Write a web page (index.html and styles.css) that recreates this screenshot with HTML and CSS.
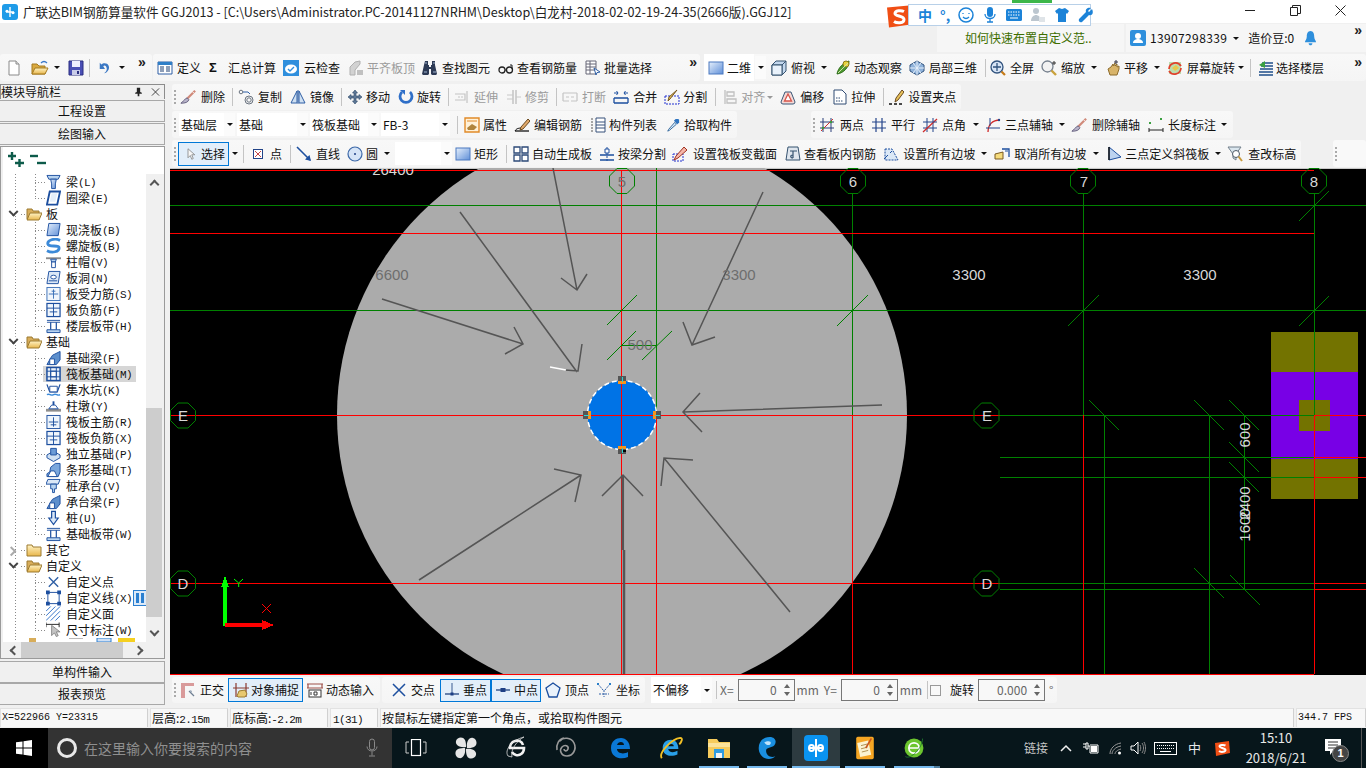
FILE: index.html
```html
<!DOCTYPE html>
<html lang="zh-CN">
<head>
<meta charset="utf-8">
<title>广联达BIM钢筋算量软件 GGJ2013</title>
<link rel="stylesheet" href="styles.css">
</head>
<body>
<svg class="sprite" aria-hidden="true">
<defs>
<linearGradient id="gb" x1="0" y1="0" x2="1" y2="1"><stop offset="0" stop-color="#e6f0fc"/><stop offset="1" stop-color="#5f8fd8"/></linearGradient>
<linearGradient id="gy" x1="0" y1="0" x2="0" y2="1"><stop offset="0" stop-color="#fff3c4"/><stop offset="1" stop-color="#e8b64c"/></linearGradient>
<symbol id="i-new" viewBox="0 0 16 16"><path d="M3 1h7l3 3v11H3z" fill="#fff" stroke="#8a8a8a"/><path d="M10 1v3h3" fill="#e4e4e4" stroke="#8a8a8a"/></symbol>
<symbol id="i-open" viewBox="0 0 18 16"><path d="M1 4h5l2 2h6v8H1z" fill="#d9a93f" stroke="#a57a20"/><path d="M1 14l3-6h13l-3 6z" fill="url(#gy)" stroke="#a57a20"/><path d="M10 3c2-2 4-2 6 0" fill="none" stroke="#3a78c8" stroke-width="1.3"/></symbol>
<symbol id="i-save" viewBox="0 0 16 16"><path d="M1 1h14v14H1z" fill="#4a4fb5" stroke="#2a2f80"/><path d="M4 1h8v6H4z" fill="#eef"/><path d="M4 10h8v5H4z" fill="#c9cce8"/><path d="M9 11h2v3H9z" fill="#2a2f80"/></symbol>
<symbol id="i-undo" viewBox="0 0 16 16"><path d="M5 3c6-2 9 3 7 7-1 2-3 4-5 4 3-2 4-5 2-8-1-1-2-1-3 0l2 3H2V2l2 2z" fill="#3b78c4"/></symbol>
<symbol id="i-def" viewBox="0 0 16 16"><path d="M1 2h14v12H1z" fill="#fff" stroke="#2f5fa5"/><path d="M1 2h14v3H1z" fill="#2f7fc8"/><path d="M3 7h4M3 9h4M3 11h4M9 7h4M9 9h4M9 11h4" stroke="#1c3f72"/></symbol>
<symbol id="i-cloud" viewBox="0 0 16 16"><path d="M0 0h16v16H0z" fill="#2f8fdd"/><ellipse cx="8" cy="9" rx="6" ry="4.5" fill="#fff"/><path d="M5 9l2 2 4-4" fill="none" stroke="#2f8fdd" stroke-width="1.4"/></symbol>
<symbol id="i-flat" viewBox="0 0 16 16"><path d="M2 7l5-5 5-1v3l-5 6v5H2z" fill="#d2d2d2" stroke="#b0b0b0"/><path d="M9 10h6v5H9z" fill="#c0c0c0"/></symbol>
<symbol id="i-find" viewBox="0 0 16 16"><path d="M3 1h3v4h1v2h2V5h1V1h3v4l2 9-1 1H10l-1-1V9H7v5l-1 1H1l-1-1 2-9z" fill="#2d3a55"/><path d="M3 3h2M11 3h2M2 12h3M11 12h3" stroke="#9fb4d0"/></symbol>
<symbol id="i-glass" viewBox="0 0 16 16"><circle cx="4" cy="10" r="3" fill="none" stroke="#222" stroke-width="1.3"/><circle cx="11.5" cy="10" r="3" fill="none" stroke="#222" stroke-width="1.3"/><path d="M7 10h2M14 9V5h-2" fill="none" stroke="#222"/></symbol>
<symbol id="i-batch" viewBox="0 0 16 16"><path d="M1 1h10v13H1z" fill="#fff" stroke="#667"/><path d="M1 4h10M1 7h10M1 10h10M5 1v13" stroke="#667"/><path d="M9 8l6 4-3 .6L11 15z" fill="#fff" stroke="#2f5fa5"/></symbol>
<symbol id="i-2d" viewBox="0 0 16 16"><rect x="1" y="2" width="14" height="12" fill="url(#gb)" stroke="#4b78c0"/></symbol>
<symbol id="i-top" viewBox="0 0 16 16"><path d="M5 1h10v10l-4 4H1V5z" fill="#c4d8ee" stroke="#35526f"/><path d="M1 5h10v10M11 5l4-4" fill="none" stroke="#35526f"/><path d="M1 5h10v10H1z" fill="#e9f2fb" stroke="#35526f"/></symbol>
<symbol id="i-orbit" viewBox="0 0 16 16"><path d="M2 14C3 8 8 3 14 1c0 6-5 12-12 13z" fill="#4f9a32" stroke="#2d6d19"/><circle cx="11" cy="4" r="3" fill="#e7d23c" stroke="#8c7a18"/><path d="M3 13L13 3" stroke="#cde3a8"/></symbol>
<symbol id="i-local" viewBox="0 0 16 16"><path d="M8 1l7 4v6l-7 4-7-4V5z" fill="#8fb2da" stroke="#31537e"/><path d="M4 3l8 10M8 1v14M1 8h14M12 3L4 13" stroke="#e7f0fa"/></symbol>
<symbol id="i-full" viewBox="0 0 16 16"><circle cx="7" cy="7" r="6" fill="#d7e4f5" stroke="#31537e" stroke-width="1.3"/><path d="M7 3v8M3 7h8" stroke="#31537e" stroke-width="1.3"/><path d="M11.5 11.5L15 15" stroke="#c57a18" stroke-width="2.2"/></symbol>
<symbol id="i-zoom" viewBox="0 0 16 16"><circle cx="6.5" cy="6.5" r="5.5" fill="#f2f2f2" stroke="#76818e" stroke-width="1.3"/><path d="M10.5 10.5L15 15" stroke="#c9a13c" stroke-width="2.4"/><path d="M13 1v4M11 3h4" stroke="#333"/></symbol>
<symbol id="i-pan" viewBox="0 0 16 16"><path d="M3 9l2 6h7l2-6V6l-2 1V4l-2 2V3L8 6V4L6 7z" fill="#d8b46a" stroke="#8d6c2d"/><path d="M11 0v4M9 2h4" stroke="#334"/></symbol>
<symbol id="i-rot" viewBox="0 0 16 16"><rect x="2" y="2" width="12" height="12" fill="#bcdcb0"/><path d="M5 8l4-3 3 3-4 3z" fill="#e9c94d"/><path d="M2 9a6.5 6.5 0 0 1 12-3M14 8a6.5 6.5 0 0 1-12 3" fill="none" stroke="#e0402c" stroke-width="1.7"/></symbol>
<symbol id="i-floor" viewBox="0 0 16 16"><path d="M4 3h11M3 6h12M2 9h13M1 12h14M1 15h14" stroke="#1f4f8a" stroke-width="1.4"/><path d="M7 1L1 5l6 3z" fill="#3aa040"/></symbol>
<symbol id="i-brush" viewBox="0 0 18 16"><path d="M17 1L8 10" stroke="#d08a7a" stroke-width="2.5"/><path d="M8 9l2 2c-1 3-4 4-9 4 2-1 3-4 7-6z" fill="#b9b4ca" stroke="#5c5878"/><path d="M14 2l2 2" stroke="#fff"/></symbol>
<symbol id="i-copy" viewBox="0 0 16 16"><circle cx="3" cy="3" r="1.8" fill="none" stroke="#6b7480"/><circle cx="11" cy="11" r="4" fill="none" stroke="#6b7480"/><circle cx="11" cy="11" r="2.2" fill="none" stroke="#6b7480"/><path d="M5 3h5l2 2" fill="none" stroke="#2f5fa5"/></symbol>
<symbol id="i-mirror" viewBox="0 0 16 16"><path d="M1 14L7 2v12zM15 14L9 2v12z" fill="#cfe0f2" stroke="#2f5fa5"/><path d="M8 1v14" stroke="#2f5fa5"/></symbol>
<symbol id="i-move" viewBox="0 0 16 16"><path d="M8 1l2.5 3H9v3h3V5.5L15 8l-3 2.5V9H9v3h1.5L8 15l-2.5-3H7V9H4v1.5L1 8l3-2.5V7h3V4H5.5z" fill="#5e7896" stroke="#2c4868" stroke-width=".6"/></symbol>
<symbol id="i-rotate" viewBox="0 0 16 16"><path d="M4 3a6 6 0 1 0 8 0" fill="none" stroke="#2f6fc8" stroke-width="2.8"/><path d="M2 1h5v5z" fill="#2f6fc8"/></symbol>
<symbol id="i-extend" viewBox="0 0 16 16"><path d="M1 5h10v6H1M13 2v12" fill="none" stroke="#c4c4c4" stroke-width="1.2"/><path d="M4 8h5" stroke="#c4c4c4" stroke-dasharray="2 1"/></symbol>
<symbol id="i-trim" viewBox="0 0 16 16"><path d="M7 1v14M10 1v14" stroke="#bcbcbc" stroke-width="1.3"/><path d="M1 6h6M1 10h6M10 8h5" stroke="#c8c8c8"/></symbol>
<symbol id="i-break" viewBox="0 0 16 16"><path d="M1 4h14M1 12h6M9 12h6M1 4v8M15 4v8" fill="none" stroke="#c4c4c4" stroke-width="1.2"/><path d="M4 8h3M9 8h3" stroke="#c4c4c4"/></symbol>
<symbol id="i-merge" viewBox="0 0 16 16"><path d="M1 9h14M1 14h14M1 9v5M15 9v5" fill="none" stroke="#1d4f9f" stroke-width="1.3"/><path d="M1 4h4l-1.5-2M15 4h-4l1.5-2M5 4l-1.5 2M11 4l1.5 2" fill="none" stroke="#1d4f9f"/></symbol>
<symbol id="i-split" viewBox="0 0 16 16"><path d="M1 7h14v8H1z" fill="none" stroke="#2030d0" stroke-dasharray="2 1"/><path d="M13 1L6 10l-2 2 1-4z" fill="#e8c25a" stroke="#7a5a20"/></symbol>
<symbol id="i-align" viewBox="0 0 16 16"><path d="M3 1v14M5 3h7v4H5zM5 10h9v4H5z" fill="none" stroke="#c0c0c0" stroke-width="1.3"/></symbol>
<symbol id="i-offset" viewBox="0 0 16 16"><path d="M5 3h6l4 10a2 2 0 0 1-2 2H3a2 2 0 0 1-2-2z" fill="#f5d9d6" stroke="#3a5878"/><path d="M8 5l3.5 7h-7z" fill="#fff" stroke="#d7554b" stroke-width="1.3"/></symbol>
<symbol id="i-stretch" viewBox="0 0 16 16"><path d="M2 1h8l4 4v10H2z" fill="#fff" stroke="#2f4a72"/><path d="M4 12h7M4 9h5" stroke="#2f4a72" stroke-dasharray="1.5 1"/></symbol>
<symbol id="i-grips" viewBox="0 0 16 16"><path d="M1 15h3M6 15h3M11 15h3" stroke="#111" stroke-width="1.5"/><path d="M7 13l1-4 6-8 2 2-6 8z" fill="#e7c15a" stroke="#6a4a20"/></symbol>
<symbol id="i-attr" viewBox="0 0 16 16"><path d="M1 1h14v14H1z" fill="#fff1d8" stroke="#e18a28" stroke-width="1.4"/><path d="M3 4h10" stroke="#e18a28"/><path d="M3 11l5-4 5 3-3 3H4z" fill="#b0843c"/></symbol>
<symbol id="i-edit" viewBox="0 0 16 16"><path d="M1 14h14" stroke="#111" stroke-width="1.3"/><path d="M1 14c2-4 6-2 7-4" fill="none" stroke="#111"/><path d="M7 10l7-8 2 2-7 8-3 1z" fill="#e0a86a" stroke="#6a4a20"/></symbol>
<symbol id="i-list" viewBox="0 0 16 16"><path d="M1 2h2M1 5h2M1 8h2M1 11h2M1 14h2" stroke="#555"/><path d="M6 1h9v14H6zM6 5h9M6 8h9M6 11h9" fill="#fff" stroke="#36507a"/></symbol>
<symbol id="i-pick" viewBox="0 0 16 16"><path d="M10 5l-7 8-1 2 2-1 8-7z" fill="#d9ecfa" stroke="#255c94"/><path d="M9 3l4 4 2-2V2l-1-1h-3z" fill="#2f74c0"/></symbol>
<symbol id="i-two" viewBox="0 0 16 16"><path d="M4 1v14M12 1v14M1 5h14M1 11h14" stroke="#2a3f7a"/><path d="M2 14L14 2" stroke="#d02a2a"/><circle cx="4" cy="11" r="1.3" fill="#3d9a40"/><circle cx="12" cy="5" r="1.3" fill="#3d9a40"/></symbol>
<symbol id="i-para" viewBox="0 0 16 16"><path d="M5 1v14M11 1v14M1 5h14M1 11h14" stroke="#23448a" stroke-width="1.2"/></symbol>
<symbol id="i-angle" viewBox="0 0 16 16"><path d="M5 1v14M11 1v14M1 11h14" stroke="#23448a"/><path d="M1 15L15 2" stroke="#d02a2a" stroke-width="1.3"/><path d="M1 5h14" stroke="#23448a"/></symbol>
<symbol id="i-arc" viewBox="0 0 16 16"><path d="M3 15C3 8 7 3 15 3" fill="none" stroke="#d02a2a" stroke-width="1.3"/><path d="M1 11h14M5 1v8" stroke="#23448a"/><circle cx="14" cy="3" r="1.2" fill="#23448a"/></symbol>
<symbol id="i-dim" viewBox="0 0 16 16"><path d="M1 11v4M15 11v4M1 13h14" stroke="#222"/><rect x="1" y="5" width="2" height="2" fill="#3aa040"/><rect x="12" y="1" width="2" height="2" fill="#3aa040"/></symbol>
<symbol id="i-cursor" viewBox="0 0 16 16"><path d="M4 1v12l3-3 2 5 2-1-2-5h4z" fill="#f7f7f7" stroke="#7c7c7c"/></symbol>
<symbol id="i-point" viewBox="0 0 16 16"><rect x="2" y="2" width="12" height="12" fill="#fff" stroke="#1d3f85" stroke-width="1.3"/><path d="M4 4l8 8M12 4l-8 8" stroke="#c03030" stroke-width="1.2"/></symbol>
<symbol id="i-line" viewBox="0 0 16 16"><path d="M1 1l13 13" stroke="#1d4f9f" stroke-width="1.6"/><path d="M15 15l-6-1.500L13.500 9z" fill="#1d4f9f"/></symbol>
<symbol id="i-circle" viewBox="0 0 16 16"><circle cx="8" cy="8" r="7" fill="#d5e4f7" stroke="#3c68a8" stroke-width="1.2"/><circle cx="8" cy="8" r="1" fill="#1d3f85"/></symbol>
<symbol id="i-auto" viewBox="0 0 16 16"><path d="M1 1h6v6H1zM9 1h6v6H9zM1 9h6v6H1zM9 9h6v6H9z" fill="#fff" stroke="#2d4a78" stroke-width="1.3"/></symbol>
<symbol id="i-bsplit" viewBox="0 0 16 16"><path d="M1 9h14M1 14h14" stroke="#1d4f9f" stroke-width="1.3"/><path d="M8 1v14" stroke="#1d4f9f" stroke-dasharray="2 1"/><path d="M6 3h4v4H6z" fill="#fff" stroke="#1d4f9f"/></symbol>
<symbol id="i-var" viewBox="0 0 16 16"><path d="M1 8h10v7H1z" fill="none" stroke="#2030d0" stroke-dasharray="2 1"/><path d="M12 1L4 10l-2 4 4-2 9-8z" fill="#f5b6a8" stroke="#a03020"/></symbol>
<symbol id="i-check" viewBox="0 0 16 16"><path d="M3 1h10l2 13H1z" fill="#dfe6ee" stroke="#35526f"/><path d="M8 5v7M8 12c-3 0-3-3 0-3M5 5h7" fill="none" stroke="#35526f" stroke-width="1.2"/></symbol>
<symbol id="i-slope" viewBox="0 0 16 16"><path d="M2 3h7l6 11H2z" fill="#dbe8f6" stroke="#1d4f9f" stroke-dasharray="2 1"/><path d="M1 13l4-4M7 7l2-2" stroke="#1d4f9f"/></symbol>
<symbol id="i-uncancel" viewBox="0 0 16 16"><path d="M1 8l8-2v7H1z" fill="#f5db7c" stroke="#7a5a20"/><path d="M8 3h7v8" fill="none" stroke="#1d4f9f" stroke-width="1.3"/><path d="M11 5h3" stroke="#1d4f9f"/></symbol>
<symbol id="i-3pt" viewBox="0 0 16 16"><path d="M2 1v13l12-3z" fill="#bcd3f0" stroke="#1d4f9f"/><path d="M2 1v13" stroke="#111" stroke-width="1.5"/></symbol>
<symbol id="i-elev" viewBox="0 0 16 16"><path d="M1 1h13l-5 7v6l-3-2V8z" fill="#dbe7ef" stroke="#72808c"/><circle cx="9" cy="8" r="3.5" fill="#fff" stroke="#4e5a66"/><path d="M11.5 10.5L15 15" stroke="#c99a3c" stroke-width="2"/></symbol>
<symbol id="i-ortho" viewBox="0 0 16 16"><path d="M1 1h13v3H5v12H1z" fill="#d99a9a"/><path d="M9 9l5 5" stroke="#6f7f92" stroke-width="1.3"/><path d="M10 8l2 1-1 2z" fill="#8c9cb0"/></symbol>
<symbol id="i-snap" viewBox="0 0 18 16"><path d="M4 1v14M14 1v14M1 6h16" stroke="#8a3a30" stroke-width="1.2"/><path d="M5 14l2-5 6-1 2 4-2 3H6z" fill="#e8c870" stroke="#9c7c30"/></symbol>
<symbol id="i-dyn" viewBox="0 0 18 16"><path d="M1 2h16M1 6h16M2 2v4M16 2v4" stroke="#a0524a" stroke-width="1.2" fill="none"/><rect x="3" y="8" width="12" height="7" fill="#fff" stroke="#333"/><path d="M5 10v3M8 10h3v3H8z" stroke="#333" fill="none"/></symbol>
<symbol id="i-cross" viewBox="0 0 16 16"><path d="M2 2l12 12M14 2L2 14" stroke="#1d4f9f" stroke-width="1.5"/></symbol>
<symbol id="i-perp" viewBox="0 0 16 16"><path d="M1 12h14" stroke="#3a5a90" stroke-width="1.5"/><path d="M8 1v11" stroke="#3a5a90"/><rect x="6.5" y="10.5" width="3" height="3" fill="#1d3f85"/></symbol>
<symbol id="i-mid" viewBox="0 0 16 16"><path d="M1 8h14" stroke="#3a5a90" stroke-width="1.5"/><rect x="5.5" y="6" width="5" height="4" fill="#1d3f85"/></symbol>
<symbol id="i-vertex" viewBox="0 0 16 16"><path d="M8 1l7 5-3 9H4L1 6z" fill="#eaf2fb" stroke="#1d4f9f" stroke-width="1.3"/></symbol>
<symbol id="i-coord" viewBox="0 0 16 16"><path d="M2 2l5 6M14 2L9 8M8 8v7M3 12h10" stroke="#2f5fa5" stroke-dasharray="2 1"/><rect x="1" y="1" width="2" height="2" fill="#2a7fc8"/><rect x="13" y="1" width="2" height="2" fill="#2a7fc8"/></symbol>
<symbol id="t-beam" viewBox="0 0 16 16"><path d="M1 1h14l-2 4H3z" fill="#b7d3f0" stroke="#1d4f9f"/><path d="M5 5h6l-1 5v5H6v-5z" fill="url(#gb)" stroke="#1d4f9f"/></symbol>
<symbol id="t-ring" viewBox="0 0 16 16"><path d="M4 1h11l-3 14H1z" fill="none" stroke="#1d4f9f" stroke-width="2"/><path d="M6 3h6l-2 9H4z" fill="#e5effa"/></symbol>
<symbol id="t-slab" viewBox="0 0 16 16"><path d="M3 1h12l-2 13H1z" fill="url(#gb)" stroke="#1d4f9f"/></symbol>
<symbol id="t-spiral" viewBox="0 0 16 16"><path d="M15 2C9-1 1 2 2 6s12 0 12 4-7 6-13 3" fill="none" stroke="#3c8ad8" stroke-width="3"/></symbol>
<symbol id="t-cap" viewBox="0 0 16 16"><path d="M0 3h16v2H0z" fill="#8a8a8a"/><path d="M5 5h6l-1 3H6z" fill="#b7d3f0" stroke="#1d4f9f"/><path d="M6 8h4v6H6z" fill="#fff" stroke="#1d4f9f"/></symbol>
<symbol id="t-hole" viewBox="0 0 16 16"><path d="M3 1h12l-2 13H1z" fill="#dbe8f7" stroke="#1d4f9f"/><ellipse cx="8" cy="7" rx="3" ry="2" fill="#fff" stroke="#1d4f9f"/><path d="M3 11h9" stroke="#1d4f9f"/></symbol>
<symbol id="t-force" viewBox="0 0 16 16"><rect x="1" y="1" width="14" height="14" fill="#f0f6fc" stroke="#3a70b8"/><path d="M8 3v10M3 8h10M6 5h4" stroke="#3a70b8"/></symbol>
<symbol id="t-neg" viewBox="0 0 16 16"><rect x="1" y="1" width="14" height="14" fill="#f0f6fc" stroke="#1d4f9f" stroke-width="1.3"/><path d="M8 1v14M1 6h14M4 10h8" stroke="#1d4f9f"/></symbol>
<symbol id="t-band" viewBox="0 0 16 16"><path d="M1 2h14M1 4h14" stroke="#1d4f9f"/><path d="M5 4v8M11 4v8" stroke="#1d4f9f" stroke-width="1.3"/><path d="M1 12h14v3H1z" fill="#b7d3f0" stroke="#1d4f9f"/></symbol>
<symbol id="t-fbeam" viewBox="0 0 16 16"><path d="M1 15l4-7 2-3 8-4v9l-4 5z" fill="#5d8fcc" stroke="#1d4f9f"/><path d="M4 15V9h5v6z" fill="#fff" stroke="#1d4f9f"/></symbol>
<symbol id="t-raft" viewBox="0 0 16 16"><rect x="1" y="1" width="14" height="14" fill="#e9f1fa" stroke="#1d4f9f" stroke-width="1.6"/><rect x="5" y="5" width="6" height="6" fill="#fff" stroke="#1d4f9f"/><path d="M1 5h14M1 11h14M5 1v14M11 1v14" stroke="#1d4f9f"/></symbol>
<symbol id="t-pit" viewBox="0 0 16 16"><path d="M1 2l3 8h8l3-8" fill="none" stroke="#1d4f9f" stroke-width="1.3"/><path d="M4 4h8v6H4z" fill="#fff" stroke="#1d4f9f"/><path d="M1 13c3-2 4 2 7 0s4 2 7 0" fill="none" stroke="#3c8ad8" stroke-width="1.5"/></symbol>
<symbol id="t-pier" viewBox="0 0 16 16"><path d="M0 11h16v3H0z" fill="#8e8e8e"/><path d="M3 11l3-4h4l3 4z" fill="#fff" stroke="#1d4f9f"/><path d="M7 3h2v4H7z" fill="#1d4f9f"/></symbol>
<symbol id="t-rmain" viewBox="0 0 16 16"><rect x="1" y="1" width="14" height="14" fill="#eef5fc" stroke="#1d4f9f"/><path d="M8 3v10M3 8h10M5 11h6" stroke="#1d4f9f"/></symbol>
<symbol id="t-indep" viewBox="0 0 16 16"><path d="M1 9l7-4 7 4v3l-7 4-7-4z" fill="#cfe0f2" stroke="#1d4f9f"/><path d="M5 2h6v7H5z" fill="#6b9bd6" stroke="#1d4f9f"/></symbol>
<symbol id="t-strip" viewBox="0 0 16 16"><path d="M1 15v-3l3-2 1-5 5-4h5v9l-2 5z" fill="#7ba7dc" stroke="#1d4f9f"/><path d="M2 15l3-6h4l3 6z" fill="#fff" stroke="#1d4f9f"/></symbol>
<symbol id="t-pilecap" viewBox="0 0 16 16"><path d="M2 1h13l-2 5H0z" fill="#dbe8f7" stroke="#1d4f9f"/><path d="M5 6h6v5H9v4H7v-4H5z" fill="#b7d3f0" stroke="#1d4f9f"/></symbol>
<symbol id="t-pile" viewBox="0 0 16 16"><path d="M6 1h4v7h3l-5 7-5-7h3z" fill="#dbe8f7" stroke="#1d4f9f" stroke-width="1.3"/></symbol>
<symbol id="t-x" viewBox="0 0 16 16"><path d="M3 3l10 10M13 3L3 13" stroke="#2f5fa5" stroke-width="1.5"/></symbol>
<symbol id="t-lbox" viewBox="0 0 16 16"><rect x="2" y="2" width="12" height="12" fill="none" stroke="#1d4f9f"/><path d="M0 0h4v4H0zM12 0h4v4h-4zM0 12h4v4H0zM12 12h4v4h-4z" fill="#1d4f9f"/></symbol>
<symbol id="t-hatch" viewBox="0 0 16 16"><path d="M0 5L5 0M0 10L10 0M0 15L15 0M5 15L15 5M10 15l5-5" stroke="#2f6fc8"/></symbol>
<symbol id="t-dimc" viewBox="0 0 16 16"><path d="M0 0v5M14 0v5M0 2h14" stroke="#222"/><path d="M6 3v11l3-3 2 4 2-1-2-4h4z" fill="#c4c4c4" stroke="#888"/></symbol>
<symbol id="t-fo" viewBox="0 0 16 14"><path d="M1 2h5l1 2h6v8H1z" fill="#d8ad5a" stroke="#9c7a30"/><path d="M1 13l3-7h12l-3 7z" fill="url(#gy)" stroke="#9c7a30"/></symbol>
<symbol id="t-fc" viewBox="0 0 16 14"><path d="M1 2h5l1 2h8v9H1z" fill="url(#gy)" stroke="#9c7a30"/></symbol>
</defs>
</svg>

<header class="titlebar">
  <svg class="applogo" viewBox="0 0 16 16"><rect width="16" height="16" rx="3" fill="#1e9be8"/><path d="M8 3v10M4 8h8M4 8c0-2 2-2 2 0M12 8c0 2-2 2-2 0" fill="none" stroke="#fff" stroke-width="1.4"/></svg>
  <span class="titletext">广联达BIM钢筋算量软件 GGJ2013 - [C:\Users\Administrator.PC-20141127NRHM\Desktop\白龙村-2018-02-02-19-24-35(2666版).GGJ12]</span>
  <span class="winbtns">
    <svg viewBox="0 0 11 11"><path d="M0 5.5h10" stroke="#222"/></svg>
    <svg viewBox="0 0 11 11"><path d="M.5 2.500h7v8h-7zM2.500 2.500v-2h8v8h-3" fill="none" stroke="#222"/></svg>
    <svg viewBox="0 0 11 11"><path d="M.5.5l10 10M10.500.500l-10 10" stroke="#222"/></svg>
  </span>
</header>

<div class="sogou">
  <svg class="sg-s" viewBox="0 0 28 24"><path d="M3 3l22-2 2 19-22 3z" fill="#f04e14"/><path d="M20 7c-3-1.500-9-1-9 2s9 2 9 6-7 4-10 2" fill="none" stroke="#fff" stroke-width="3"/></svg>
  <div class="sg-bar">
    <span class="sg-zh">中</span><span class="sg-p">°,</span>
    <svg viewBox="0 0 16 16"><circle cx="8" cy="8" r="7" fill="none" stroke="#1c83d8" stroke-width="1.5"/><path d="M5 6v1M11 6v1M5 10c2 2 4 2 6 0" stroke="#1c83d8" fill="none" stroke-width="1.3"/></svg>
    <svg viewBox="0 0 16 16"><rect x="5" y="0" width="6" height="10" rx="3" fill="#1c83d8"/><path d="M3 7c0 6 10 6 10 0M8 12v3M5 15h6" fill="none" stroke="#1c83d8" stroke-width="1.3"/></svg>
    <svg viewBox="0 0 16 16"><rect x="0" y="2" width="16" height="12" rx="1.5" fill="#1c83d8"/><path d="M2 5h12M2 8h12" stroke="#fff" stroke-dasharray="1.5 1"/><path d="M4 11h8" stroke="#fff"/></svg>
    <svg viewBox="0 0 16 16"><circle cx="6" cy="4" r="3" fill="#bcc6cf"/><path d="M1 14c0-4 3-6 5-6s5 2 5 6z" fill="#bcc6cf"/><path d="M9 10h6v5H9z" fill="#dfe4e8"/></svg>
    <svg viewBox="0 0 16 16"><path d="M5 1l3 1 3-1 4 3-2 3-1-1v9H4V6L3 7 1 4z" fill="#1c83d8"/></svg>
    <svg viewBox="0 0 16 16"><path d="M14 2l-3 3-1-1 3-3c-3-1-6 1-5 4L1 12c-1 2 1 4 3 3l7-7c3 1 5-2 3-6z" fill="#1c83d8"/></svg>
  </div>
</div>
<div class="greentab"></div>

<div class="topbar">
  <div class="notice">如何快速布置自定义范..</div>
  <div class="userbox">
    <svg class="ic" viewBox="0 0 16 16"><rect width="16" height="16" rx="2" fill="#2e8fdc"/><circle cx="8" cy="6" r="3" fill="#fff"/><path d="M3 13c0-3 3-4 5-4s5 1 5 4z" fill="#fff"/></svg>
    <span class="phone">13907298339</span><i class="dd dd-phone"></i>
    <span class="bean">造价豆:0</span>
    <svg class="bell" viewBox="0 0 14 18"><path d="M7 1c3 0 4 3 4 6 0 3 2 4 2 6H1c0-2 2-3 2-6 0-3 1-6 4-6z" fill="#2e8fdc"/><path d="M5 14c0 3 4 3 4 0z" fill="#2e8fdc"/></svg>
    <span class="more more-user">»</span>
  </div>
</div>

<div class="row row1">
  <div class="seg seg-a">
    <svg class="ic ic-a"><use href="#i-new"/></svg>
    <svg class="ic ic-b"><use href="#i-open"/></svg><i class="dd dd-a"></i>
    <svg class="ic ic-c"><use href="#i-save"/></svg><i class="sep sep-a"></i>
    <svg class="ic ic-d"><use href="#i-undo"/></svg><i class="dd dd-b"></i>
    <span class="more more-a">»</span>
  </div>
  <div class="seg seg-b">
    <span class="it"><svg class="ic"><use href="#i-def"/></svg>定义</span>
    <span class="it m7"><b class="sigma">Σ</b>汇总计算</span>
    <span class="it g5"><svg class="ic"><use href="#i-cloud"/></svg>云检查</span>
    <span class="it off g3 m7"><svg class="ic"><use href="#i-flat"/></svg>平齐板顶</span>
    <span class="it"><svg class="ic"><use href="#i-find"/></svg>查找图元</span>
    <span class="it g3"><svg class="ic"><use href="#i-glass"/></svg>查看钢筋量</span>
    <span class="it g3"><svg class="ic"><use href="#i-batch"/></svg>批量选择</span>
    <span class="more more-b">»</span>
  </div>
  <div class="seg seg-c">
    <span class="combo c-2d"><svg class="ic"><use href="#i-2d"/></svg>二维</span><span class="ddbox"><i class="dd"></i></span>
    <span class="it"><svg class="ic"><use href="#i-top"/></svg>俯视<i class="dd dd-in"></i></span>
    <span class="it g3 m7"><svg class="ic"><use href="#i-orbit"/></svg>动态观察</span>
    <span class="it"><svg class="ic"><use href="#i-local"/></svg>局部三维</span><i class="sep sep-4"></i>
    <span class="it m7"><svg class="ic"><use href="#i-full"/></svg>全屏</span>
    <span class="it"><svg class="ic"><use href="#i-zoom"/></svg>缩放<i class="dd dd-in"></i></span>
    <span class="it g3 m7"><svg class="ic"><use href="#i-pan"/></svg>平移<i class="dd dd-3"></i></span>
    <span class="it m6"><svg class="ic"><use href="#i-rot"/></svg>屏幕旋转<i class="dd dd-near"></i></span><i class="sep sep-7"></i>
    <span class="it g2"><svg class="ic"><use href="#i-floor"/></svg>选择楼层</span>
    <span class="more more-c">»</span>
  </div>
</div>

<div class="main">
  <aside class="side">
    <div class="side-head"><span>模块导航栏</span><span class="pins"><svg viewBox="0 0 10 12"><path d="M3 1h4v5l2 1v1H6v3H4V8H1V7l2-1z" fill="#222"/></svg><svg viewBox="0 0 10 10"><path d="M1 1l8 8M9 1L1 9" stroke="#333"/></svg></span></div>
    <button class="sbtn sbtn-a">工程设置</button>
    <button class="sbtn">绘图输入</button>
    <div class="panel">
      <div class="panel-tools">
        <svg viewBox="0 0 16 15"><path d="M0 4h8M4 0v8" stroke="#0d5b4a" stroke-width="2.4"/><path d="M7 11h9M11.500 7v8" stroke="#0d5b4a" stroke-width="2.4"/></svg>
        <svg viewBox="0 0 16 15"><path d="M0 4h8" stroke="#0d5b4a" stroke-width="2.4"/><path d="M7 11h9" stroke="#0d5b4a" stroke-width="2.4"/></svg>
      </div>
      <div class="tree-wrap">
        <ul class="tree">
          <li class="n"><svg class="ti"><use href="#t-beam"/></svg>梁<span class="lat">(L)</span></li>
          <li class="n last"><svg class="ti"><use href="#t-ring"/></svg>圈梁<span class="lat">(E)</span></li>
          <li class="g"><i class="chev"></i><svg class="fo"><use href="#t-fo"/></svg>板</li>
          <li class="n"><svg class="ti"><use href="#t-slab"/></svg>现浇板<span class="lat">(B)</span></li>
          <li class="n"><svg class="ti"><use href="#t-spiral"/></svg>螺旋板<span class="lat">(B)</span></li>
          <li class="n"><svg class="ti"><use href="#t-cap"/></svg>柱帽<span class="lat">(V)</span></li>
          <li class="n"><svg class="ti"><use href="#t-hole"/></svg>板洞<span class="lat">(N)</span></li>
          <li class="n"><svg class="ti"><use href="#t-force"/></svg>板受力筋<span class="lat">(S)</span></li>
          <li class="n"><svg class="ti"><use href="#t-neg"/></svg>板负筋<span class="lat">(F)</span></li>
          <li class="n last"><svg class="ti"><use href="#t-band"/></svg>楼层板带<span class="lat">(H)</span></li>
          <li class="g"><i class="chev"></i><svg class="fo"><use href="#t-fo"/></svg>基础</li>
          <li class="n"><svg class="ti"><use href="#t-fbeam"/></svg>基础梁<span class="lat">(F)</span></li>
          <li class="n sel"><svg class="ti"><use href="#t-raft"/></svg>筏板基础<span class="lat">(M)</span></li>
          <li class="n"><svg class="ti"><use href="#t-pit"/></svg>集水坑<span class="lat">(K)</span></li>
          <li class="n"><svg class="ti"><use href="#t-pier"/></svg>柱墩<span class="lat">(Y)</span></li>
          <li class="n"><svg class="ti"><use href="#t-rmain"/></svg>筏板主筋<span class="lat">(R)</span></li>
          <li class="n"><svg class="ti"><use href="#t-neg"/></svg>筏板负筋<span class="lat">(X)</span></li>
          <li class="n"><svg class="ti"><use href="#t-indep"/></svg>独立基础<span class="lat">(P)</span></li>
          <li class="n"><svg class="ti"><use href="#t-strip"/></svg>条形基础<span class="lat">(T)</span></li>
          <li class="n"><svg class="ti"><use href="#t-pilecap"/></svg>桩承台<span class="lat">(V)</span></li>
          <li class="n"><svg class="ti"><use href="#t-fbeam"/></svg>承台梁<span class="lat">(F)</span></li>
          <li class="n"><svg class="ti"><use href="#t-pile"/></svg>桩<span class="lat">(U)</span></li>
          <li class="n last"><svg class="ti"><use href="#t-band"/></svg>基础板带<span class="lat">(W)</span></li>
          <li class="g"><i class="chev shut"></i><svg class="fo"><use href="#t-fc"/></svg>其它</li>
          <li class="g"><i class="chev"></i><svg class="fo"><use href="#t-fo"/></svg>自定义</li>
          <li class="n"><svg class="ti"><use href="#t-x"/></svg>自定义点</li>
          <li class="n"><svg class="ti"><use href="#t-lbox"/></svg>自定义线<span class="lat">(X)</span></li>
          <li class="n"><svg class="ti"><use href="#t-hatch"/></svg>自定义面</li>
          <li class="n last"><svg class="ti"><use href="#t-dimc"/></svg>尺寸标注<span class="lat">(W)</span></li>
        </ul>
        <svg class="float-ic" viewBox="0 0 14 16"><rect width="14" height="16" fill="#dbe9f8"/><rect x=".5" y=".5" width="13" height="15" fill="none" stroke="#2a7fd0"/><path d="M3 3h3v10H3zM8 3h3v10H8z" fill="#2a7fd0"/></svg>
        <svg class="float-b" viewBox="0 0 106 4"><path d="M0 0h7v4H0z" fill="#d8ad5a"/><path d="M40 0h14" fill="none" stroke="#777"/><path d="M68 0h14v4H68z" fill="#cfe0f5" stroke="#2a7fd0"/><path d="M89 0h17v4H89z" fill="#f5d020"/></svg>
        <div class="vscroll"><i class="up"></i><b class="vthumb"></b><i class="down"></i></div>
      </div>
      <div class="hscroll"><i class="left"></i><b class="hthumb"></b><i class="right"></i></div>
    </div>
    <button class="sbtn sbtn-b">单构件输入</button>
    <button class="sbtn sbtn-c">报表预览</button>
  </aside>

  <section class="work">
    <div class="row row2">
      <div class="seg seg-d">
        <i class="grip"></i>
        <span class="it g5 m7 first"><svg class="ic"><use href="#i-brush"/></svg>删除</span><i class="sep"></i>
        <span class="it"><svg class="ic"><use href="#i-copy"/></svg>复制</span>
        <span class="it m7"><svg class="ic"><use href="#i-mirror"/></svg>镜像</span><i class="sep"></i>
        <span class="it g3"><svg class="ic"><use href="#i-move"/></svg>移动</span>
        <span class="it g3 m7"><svg class="ic"><use href="#i-rotate"/></svg>旋转</span><i class="sep"></i>
        <span class="it off"><svg class="ic"><use href="#i-extend"/></svg>延伸</span>
        <span class="it off g3 m7"><svg class="ic"><use href="#i-trim"/></svg>修剪</span><i class="sep"></i>
        <span class="it off m7"><svg class="ic"><use href="#i-break"/></svg>打断</span>
        <span class="it m7"><svg class="ic"><use href="#i-merge"/></svg>合并</span>
        <span class="it g3"><svg class="ic"><use href="#i-split"/></svg>分割</span><i class="sep sep-6"></i>
        <span class="it off g3 m7"><svg class="ic"><use href="#i-align"/></svg>对齐<i class="dd dd-grey"></i></span>
        <span class="it"><svg class="ic"><use href="#i-offset"/></svg>偏移</span>
        <span class="it g3"><svg class="ic"><use href="#i-stretch"/></svg>拉伸</span><i class="sep sep-4"></i>
        <span class="it"><svg class="ic"><use href="#i-grips"/></svg>设置夹点</span>
      </div>
    </div>
    <div class="row row3">
      <div class="seg seg-e">
        <i class="grip"></i>
        <span class="combo c-44">基础层</span><span class="ddbox"><i class="dd"></i></span>
        <span class="combo c-60">基础</span><span class="ddbox"><i class="dd"></i></span>
        <span class="combo c-58">筏板基础</span><span class="ddbox"><i class="dd"></i></span>
        <span class="combo c-58">FB-3</span><span class="ddbox"><i class="dd"></i></span>
        <i class="sep sep-e"></i>
        <span class="it g3 m7"><svg class="ic"><use href="#i-attr"/></svg>属性</span>
        <span class="it"><svg class="ic"><use href="#i-edit"/></svg>编辑钢筋</span>
        <span class="it g3 m9"><svg class="ic"><use href="#i-list"/></svg>构件列表</span>
        <span class="it"><svg class="ic ic-14"><use href="#i-pick"/></svg>拾取构件</span>
      </div>
      <div class="seg seg-f">
        <i class="grip"></i>
        <span class="it g5 first m7"><svg class="ic"><use href="#i-two"/></svg>两点</span>
        <span class="it m7"><svg class="ic"><use href="#i-para"/></svg>平行</span>
        <span class="it m6"><svg class="ic"><use href="#i-angle"/></svg>点角<i class="dd dd-3"></i></span>
        <span class="it m6"><svg class="ic"><use href="#i-arc"/></svg>三点辅轴<i class="dd dd-in"></i></span>
        <span class="it g5"><svg class="ic"><use href="#i-brush"/></svg>删除辅轴</span>
        <span class="it"><svg class="ic"><use href="#i-dim"/></svg>长度标注<i class="dd dd-1"></i></span>
      </div>
    </div>
    <div class="row row4">
      <div class="seg seg-g">
        <i class="grip"></i>
        <span class="it active it-sel"><svg class="ic ic-sm"><use href="#i-cursor"/></svg>选择</span><i class="dd dd-sel"></i><i class="sep sep-8"></i>
        <span class="it it-pt"><svg class="ic ic-12"><use href="#i-point"/></svg>点</span><i class="sep"></i>
        <span class="it m7"><svg class="ic"><use href="#i-line"/></svg>直线</span>
        <span class="it g3 m5"><svg class="ic"><use href="#i-circle"/></svg>圆<i class="dd dd-3"></i></span>
        <span class="combo c-46"></span><span class="ddbox"><i class="dd"></i></span>
        <span class="it g3 it-rect"><svg class="ic"><use href="#i-2d"/></svg>矩形</span><i class="sep sep-6"></i>
        <span class="it g3 m7"><svg class="ic"><use href="#i-auto"/></svg>自动生成板</span>
        <span class="it g3 m6"><svg class="ic"><use href="#i-bsplit"/></svg>按梁分割</span>
        <span class="it g5"><svg class="ic"><use href="#i-var"/></svg>设置筏板变截面</span>
        <span class="it g3 m7"><svg class="ic"><use href="#i-check"/></svg>查看板内钢筋</span>
        <span class="it m7"><svg class="ic"><use href="#i-slope"/></svg>设置所有边坡<i class="dd dd-in"></i></span>
        <span class="it"><svg class="ic"><use href="#i-uncancel"/></svg>取消所有边坡<i class="dd dd-3"></i></span>
        <span class="it g2 m6"><svg class="ic"><use href="#i-3pt"/></svg>三点定义斜筏板<i class="dd dd-4"></i></span>
        <span class="it g5"><svg class="ic"><use href="#i-elev"/></svg>查改标高</span>
      </div>
      <div class="seg seg-h"><i class="grip"></i></div>
    </div>

    <svg class="cad" viewBox="170 168 1196 507" shape-rendering="crispEdges">
      <rect x="170" y="168" width="1196" height="507" fill="#000"/>
      <rect x="170" y="168" width="1196" height="1" fill="#c8c8c8"/>
      <circle cx="622" cy="415" r="285" fill="#ababab" shape-rendering="auto"/>
      <g class="blocks">
        <rect class="olive" x="1271" y="332" width="87" height="167"/>
        <rect class="violet" x="1271" y="372" width="87" height="87"/>
        <rect class="olive" x="1299" y="400" width="31" height="31"/>
      </g>
      <g class="gl">
        <path d="M170 205.500H1366M170 310.500H1366M1000 415.500H1314M1000 457.500H1366M1000 477.500H1366M1000 583.500H1314M1000 589.500H1314"/>
        <path d="M656.500 168V415M852.500 193V415M1083.500 193V415M1314.500 194V415M1104.500 415V674M1209.500 415V674M1244.500 415V589M622 345.500H656"/>
      </g>
      <g class="rd">
        <path d="M170 170.500H1314M170 233.500H1314M170 415.500H1000M1314 415.500H1366M1314 457.500H1366M1314 477.500H1366M170 583.500H1000M1314 583.500H1366M1314 589.500H1366M170 674.500H1314"/>
        <path d="M621.500 170V674M656.500 415V674M852.500 415V674M1083.500 415V674M1314.500 415V674"/>
      </g>
      <g class="tick" shape-rendering="auto">
        <path d="M607 325L637 295M607 360L636 331M642 360L672 331M837 326L868 295M1068 326L1099 295M1299 221L1329 191M1299 326L1329 296"/>
        <path d="M1089 400L1119 430M1194 400L1224 430M1229 400L1259 430M1229 442L1259 472M1229 462L1259 492M1194 568L1224 598M1230 575L1260 605"/>
      </g>
      <g class="hexes" shape-rendering="auto">
        <polygon points="848,168.500 858,168.500 865.500,176 865.500,186 858,193.500 848,193.500 840.500,186 840.500,176"/>
        <polygon points="1078,168.500 1088,168.500 1095.500,176 1095.500,186 1088,193.500 1078,193.500 1070.500,186 1070.500,176"/>
        <polygon points="1309,168.500 1319,168.500 1326.500,176 1326.500,186 1319,193.500 1309,193.500 1301.500,186 1301.500,176"/>
        <polygon points="617,168.500 627,168.500 634.500,176 634.500,186 627,193.500 617,193.500 609.500,186 609.500,176"/>
        <polygon points="178,403 188,403 195.500,410.500 195.500,420.500 188,428 178,428 170.500,420.500 170.500,410.500"/>
        <polygon points="178,571 188,571 195.500,578.500 195.500,588.500 188,596 178,596 170.500,588.500 170.500,578.500"/>
        <polygon points="981.500,403 991.500,403 999,410.500 999,420.500 991.500,428 981.500,428 974,420.500 974,410.500"/>
        <polygon points="981.500,571 991.500,571 999,578.500 999,588.500 991.500,596 981.500,596 974,588.500 974,578.500"/>
      </g>
      <g class="arrows" shape-rendering="auto">
        <path d="M553 168L577 290M561 278L577 290L587 274"/>
        <path d="M460 212L577 372M582 344L578 371L565 370"/>
        <path d="M382 299L523 344M514 327L523 344L505 354"/>
        <path d="M419 580L581 475M554 469L581 475L575 502"/>
        <path d="M763 192L692 345M683 322L692 345L715 337"/>
        <path d="M882 405L683 412M700 393L683 412L702 432"/>
        <path d="M790 612L664 458M661 486L664 458L693 460"/>
        <path d="M602 496L623 475L643 496"/>
        <path class="thick" d="M622.800 475V550M624 550V674"/>
        <path class="white" d="M550 367L566 370"/>
      </g>
      <circle cx="622" cy="415" r="34.500" class="bluec" shape-rendering="auto"/>
      <path class="rd" d="M587 415.500H657M621.500 381V450M656.500 415V450"/>
      <g class="handles">
        <rect x="618" y="376" width="8" height="8" fill="#555"/><rect x="618" y="381" width="8" height="3" fill="#f7941d"/>
        <rect x="618" y="446" width="8" height="8" fill="#555"/><rect x="618" y="446" width="8" height="3" fill="#f7941d"/><rect x="622" y="450" width="4" height="2" fill="#000"/>
        <rect x="583" y="411" width="8" height="8" fill="#555"/><rect x="588" y="411" width="3" height="8" fill="#f7941d"/>
        <rect x="653" y="411" width="8" height="8" fill="#555"/><rect x="653" y="411" width="3" height="8" fill="#f7941d"/>
        <path d="M622 377v5M622 448v5M584 415.500h5M655 415.500h5" stroke="#30d0d0"/>
      </g>
      <g class="axis">
        <rect x="223" y="585" width="4" height="41" fill="#0f0"/>
        <polygon points="225,576 229,587 221,587" fill="#0f0"/>
        <rect x="225" y="623" width="40" height="4" fill="#f00"/>
        <polygon points="274,625 262,620 262,630" fill="#f00"/>
        <path d="M234 579L238.700 583L243 579M238.700 583V587" fill="none" stroke="#0f0" shape-rendering="auto"/>
        <path d="M262 604L271 613M271 604L262 613" stroke="#f00" shape-rendering="auto"/>
      </g>
      <g class="dims">
        <text x="393" y="175" class="lw m">26400</text>
        <text x="392" y="280" class="dk m">6600</text>
        <text x="739" y="280" class="dk m">3300</text>
        <text x="969" y="280" class="lw m">3300</text>
        <text x="1200" y="280" class="lw m">3300</text>
        <text x="640" y="350" class="dk m">500</text>
        <text x="622" y="187" class="dk m">5</text>
        <text x="853" y="187" class="lw m">6</text>
        <text x="1084" y="187" class="lw m">7</text>
        <text x="1314" y="187" class="lw m">8</text>
        <text x="183" y="421" class="lw m">E</text>
        <text x="183" y="589" class="lw m">D</text>
        <text x="987" y="421" class="lw m">E</text>
        <text x="987" y="589" class="lw m">D</text>
        <text transform="translate(1250 435) rotate(-90)" class="lw m">600</text>
        <text transform="translate(1250 503) rotate(-90)" class="lw m">2400</text>
        <text transform="translate(1250 525) rotate(-90)" class="lw m">1600</text>
      </g>
    </svg>

    <div class="row rowb">
      <div class="seg seg-i">
        <i class="grip"></i>
        <span class="it it-b first"><svg class="ic"><use href="#i-ortho"/></svg>正交</span>
        <span class="it active it-snap"><svg class="ic ic-w"><use href="#i-snap"/></svg>对象捕捉</span>
        <span class="it it-dyn"><svg class="ic ic-w"><use href="#i-dyn"/></svg>动态输入</span>
      </div>
      <div class="seg seg-j">
        <span class="it it-cross"><svg class="ic"><use href="#i-cross"/></svg>交点</span>
        <span class="it active it-pd"><svg class="ic"><use href="#i-perp"/></svg>垂点</span>
        <span class="it active it-md"><svg class="ic"><use href="#i-mid"/></svg>中点</span>
        <span class="it it-vx"><svg class="ic"><use href="#i-vertex"/></svg>顶点</span>
        <span class="it it-last"><svg class="ic"><use href="#i-coord"/></svg>坐标</span>
      </div>
      <div class="seg seg-k">
        <span class="combo c-50">不偏移</span><span class="ddbox ddbox-k"><i class="dd"></i></span><i class="sep sep-k"></i>
        <span class="lbl">X=</span><span class="spin s-57">0<i class="arr"></i></span><span class="lbl">mm</span>
        <span class="lbl lbl-y">Y=</span><span class="spin s-57">0<i class="arr"></i></span><span class="lbl">mm</span>
        <i class="sep sep-c"></i><i class="chk"></i><span class="rot">旋转</span>
        <span class="spin s-67">0.000<i class="arr"></i></span><span class="lbl">°</span>
      </div>
    </div>
  </section>
</div>

<footer class="status">
  <span class="cell w1 mono">X=522966 Y=23315</span>
  <span class="cell w2">层高:<span class="lat">2.15m</span></span>
  <span class="cell w3">底标高:<span class="lat">-2.2m</span></span>
  <span class="cell w4"><span class="lat">1(31)</span></span>
  <span class="cell w5">按鼠标左键指定第一个角点，或拾取构件图元</span>
  <span class="cell w6 mono">344.7 FPS</span>
</footer>

<nav class="taskbar">
  <div class="start"><svg viewBox="0 0 16 16"><path d="M0 2.300L6.500 1.400V7.600H0zM7.500 1.300L16 0V7.600H7.500zM0 8.500H6.500V14.600L0 13.700zM7.500 8.500H16V16L7.500 14.800z" fill="#fff"/></svg></div>
  <div class="search">
    <i class="cortana"></i><span class="stext">在这里输入你要搜索的内容</span>
    <svg class="mic" viewBox="0 0 12 18"><rect x="3.500" y=".5" width="5" height="11" rx="2.500" fill="none" stroke="#8a8a8a"/><path d="M1 8c0 6 10 6 10 0M6 13v4M3 17.500h6" fill="none" stroke="#8a8a8a"/></svg>
  </div>
  <div class="apps">
    <span class="tile tile-v"><svg viewBox="0 0 22 18"><rect x="6.500" y=".5" width="9" height="16" fill="none" stroke="#fff" stroke-width="1.200"/><path d="M4 3H1v11h3M18 3h3v11h-3" fill="none" stroke="#ccc"/></svg></span>
    <span class="tile tile-l tile-fan"><svg viewBox="0 0 24 24"><path d="M12 11C6 12 1 9 2 5s7-5 9-1c1 2 1 5 1 7zM13 12C12 6 15 1 19 2s5 7 1 9c-2 1-5 1-7 1zM12 13c6-1 11 2 10 6s-7 5-9 1c-1-2-1-5-1-7zM11 12c1 6-2 11-6 10s-5-7-1-9c2-1 5-1 7-1z" fill="#e6e6e6"/></svg></span>
    <span class="tile tile-l"><svg viewBox="0 0 24 24"><path d="M19 9c-1-4-5-5-8-4-4 1-5 5-5 7h14c0 5-4 8-8 7-3-1-4-3-4-3" fill="none" stroke="#f2f2f2" stroke-width="2.600"/><path d="M4 20C0 14 8 4 20 1c-6 3-14 12-12 20z" fill="none" stroke="#ddd" stroke-width=".8"/></svg></span>
    <span class="tile tile-l"><svg viewBox="0 0 24 24"><path d="M6 5C9 1 17 1 20 7s-1 13-7 13-8-6-5-9 7-1 6 2-4 2-4 0M3 14C2 8 5 3 10 2" fill="none" stroke="#999" stroke-width="1.600"/></svg></span>
    <span class="tile tile-l tile-edge"><svg viewBox="0 0 24 24"><path d="M3 12C3 5 8 2 13 2s9 4 9 11H9c0 4 6 6 11 3v5c-7 3-17 1-17-9zM9 9h7c0-4-6-4-7 0z" fill="#0a78d7"/></svg></span>
    <span class="tile tile-l tile-ie"><svg viewBox="0 0 26 26"><path d="M4 13c0-6 4-9 9-9s8 4 8 10H10c0 3 5 5 10 2v4c-6 3-16 2-16-7zM10 11h6c0-3-5-3-6 0z" fill="#2aa0e8"/><path d="M3 24C-1 18 14 3 23 2c3 0 2 4-1 7" fill="none" stroke="#f2c026" stroke-width="2"/></svg></span>
    <span class="tile tile-u tile-folder"><svg viewBox="0 0 24 22"><path d="M1 2h9l2 3h11v16H1z" fill="#f6cb5c"/><path d="M1 6h22v4H1z" fill="#fbe29a"/><path d="M7 12h10v9H7z" fill="#2f9be0"/><path d="M9 16h6v5H9z" fill="#f3f3f3"/></svg></span>
    <span class="tile tile-u"><svg viewBox="0 0 24 26"><path d="M15 1c-8 0-12 6-12 12 0 7 5 12 11 12 3 0 5-1 7-3-5 2-10-1-10-6 0-4 6-3 9-6 3-4 1-9-5-9z" fill="#1a8fe0"/><path d="M9 7c3-2 8-2 7 1s-5 2-7-1z" fill="#bfe3fa"/></svg></span>
    <span class="tile tile-act tile-1"><svg viewBox="0 0 24 26"><rect width="24" height="26" rx="4" fill="#0a93f0"/><path d="M12 4v18M5 13h14M5 13c0-4 5-4 5 0s-5 4-5 0zM19 13c0 4-5 4-5 0s5-4 5 0z" fill="none" stroke="#fff" stroke-width="2"/></svg></span>
    <span class="tile tile-u tile-1"><svg viewBox="0 0 24 30"><rect x="1" y="1" width="22" height="28" rx="2" fill="#f6a623"/><rect x="4" y="7" width="14" height="18" fill="#fbf3d2" transform="rotate(-12 11 16)"/><path d="M7 12l8-2M7 16l8-2M8 20l8-2" stroke="#a07b35"/><path d="M20 3l-7 12" stroke="#c9571e" stroke-width="2"/></svg></span>
    <span class="tile tile-u tile-1 tile-ext"><svg viewBox="0 0 24 28"><circle cx="12" cy="14" r="11" fill="#6cc52f"/><path d="M6 14h11M6 14c0-8 12-8 12 0M6 14c0 8 12 8 12 0" fill="none" stroke="#fff" stroke-width="2"/><path d="M2 24C8 28 22 14 22 3" fill="none" stroke="#1e7d2e"/></svg></span>
  </div>
  <div class="tray">
    <span class="t-link">链接</span>
    <svg class="t-chev" viewBox="0 0 12 8"><path d="M1 7l5-5 5 5" fill="none" stroke="#f0f0f0" stroke-width="1.500"/></svg>
    <svg class="t-plug" viewBox="0 0 16 12"><path d="M0 2h3M0 5h3M3 1h2v6H3zM5 4h2v7h8V3H7" fill="none" stroke="#fff"/><rect x="8" y="4" width="6" height="6" fill="#fff"/></svg>
    <svg class="t-wifi" viewBox="0 0 13 13"><path d="M1 12C1 7 5 2 12 1M3 12c0-3 3-7 9-8M6 12c0-2 2-4 6-5" fill="none" stroke="#9a9a9a"/><circle cx="10.500" cy="11" r="1.500" fill="#fff"/></svg>
    <svg class="t-spk" viewBox="0 0 16 14"><path d="M1 5h3l4-4v12l-4-4H1z" fill="none" stroke="#fff"/><path d="M10 4c1 2 1 4 0 6M12 2c2 3 2 7 0 10M14 1c2 4 2 8 0 12" fill="none" stroke="#8a8a8a"/></svg>
    <svg class="t-kb" viewBox="0 0 23 13"><rect x=".5" y=".5" width="22" height="12" fill="none" stroke="#fff"/><path d="M3 3.500h17M3 6.500h17" stroke="#fff" stroke-dasharray="1 1"/><path d="M6 9.500h11" stroke="#fff"/></svg>
    <span class="t-zh">中</span>
    <svg class="t-sg" viewBox="0 0 16 15"><path d="M1 2l14-2 1 12-14 3z" fill="#f04e14"/><path d="M11.500 4.500c-2-1-6-.5-6 1s6 1.500 6 3.500-4.500 2.500-6.500 1" fill="none" stroke="#fff" stroke-width="2"/></svg>
    <span class="clock"><span>15:10</span><span>2018/6/21</span></span>
    <span class="notif"><svg viewBox="0 0 16 16"><path d="M0 0h16v12h-8l-3 4v-4H0z" fill="#fff"/><path d="M3 3h10M3 6h10M3 9h7" stroke="#333"/></svg><b class="badge">1</b></span>
    <i class="t-edge"></i>
  </div>
</nav>
</body>
</html>
```
FILE: styles.css
```css
* { box-sizing: border-box; }
html, body { margin: 0; padding: 0; }
body {
  width: 1366px; height: 768px; overflow: hidden; position: relative;
  display: flex; flex-direction: column;
  background: #f0f0f0; color: #111;
  font: 12px/16px "Noto Sans CJK SC", "Liberation Sans", sans-serif;
}
ul { list-style: none; margin: 0; padding: 0; }
i, b { font-style: normal; }
.sprite { position: absolute; width: 0; height: 0; }
.lat { font: 11px/16px "Liberation Mono", monospace; letter-spacing: -.6px; color: inherit; }
.mono { font-family: "Liberation Mono", monospace; font-size: 10px; }

.titlebar { height: 23px; background: #fff; display: flex; align-items: center; padding-left: 2px; flex: none; }
.applogo { width: 16px; height: 16px; margin-right: 5px; }
.titletext { font-size: 12.6px; white-space: nowrap; color: #222; }
.winbtns { position: absolute; right: 20px; top: 5px; display: flex; gap: 34px; }
.winbtns svg { width: 11px; height: 11px; }

.sogou { position: absolute; left: 884px; top: 3px; width: 207px; height: 23px; z-index: 5; }
.sg-s { position: absolute; left: 0; top: 1px; width: 28px; height: 25px; }
.sg-bar { position: absolute; left: 24px; top: 1px; right: 0; height: 22px; background: #fff; border: 1px solid #b8d0e8; display: flex; align-items: center; gap: 8px; padding-left: 9px; }
.sg-bar svg { width: 16px; height: 16px; flex: none; }
.sg-zh { color: #1c83d8; font-weight: 700; font-size: 14px; }
.sg-p { color: #1c83d8; font-weight: 700; font-size: 14px; width: 13px; }
.greentab { position: absolute; left: 1012px; top: 0; width: 40px; height: 3px; background: #3cb64a; }

.topbar { height: 31px; display: flex; align-items: flex-start; padding: 1px 0 0 937px; flex: none; }
.notice { width: 187px; height: 28px; background: #f6f6f6; color: #3e6e00; padding: 6px 0 0 28px; }
.userbox { margin-left: 2px; width: 240px; height: 28px; background: #f6f6f6; display: flex; align-items: center; padding-left: 4px; position: relative; }
.phone { margin-left: 4px; letter-spacing: .36px; }
.bean { margin-left: 9px; }
.dd-phone { margin-left: 6px; }
.bell { width: 13px; height: 17px; margin-left: 10px; }
.more-user { position: absolute; right: 4px; top: -1px; }

.row { display: flex; flex: none; }
.row1 { height: 27px; margin-bottom: 3px; }
.seg { background: linear-gradient(#f8f8f8, #f5f5f5); border-radius: 3px; display: flex; align-items: center; position: relative; height: 100%; white-space: nowrap; }
.ic { width: 16px; height: 16px; flex: none; display: block; }
.ic-w { width: 18px; }
.ic-sm { width: 12px; margin: 0 4px 0 0; }
.ic-12 { width: 12px; }
.ic-14 { width: 14px; }
.it { display: flex; align-items: center; gap: 4px; margin-right: 8px; flex: none; }
.g2 { gap: 2px; }
.g3 { gap: 3px; }
.g5 { gap: 5px; }
.m4 { margin-right: 4px; }
.m5 { margin-right: 5px; }
.m6 { margin-right: 6px; }
.m7 { margin-right: 7px; }
.m9 { margin-right: 9px; }
.first { margin-left: 1px; }
.off { color: #9b9b9b; }
.sep { width: 1px; height: 18px; background: #c4c4c4; flex: none; margin: 0 5px 0 0; }
.sep-4 { margin-right: 4px; }
.sep-6 { margin-right: 6px; }
.sep-7 { margin-right: 7px; }
.sep-8 { margin-right: 8px; }
.dd { width: 0; height: 0; border: 3px solid transparent; border-top: 3.5px solid #111; border-bottom: 0; display: block; flex: none; }
.dd-in { margin-left: 2px; }
.dd-1 { margin-left: 1px; }
.dd-3 { margin-left: 3px; }
.dd-4 { margin-left: 4px; }
.dd-near { margin-left: -1px; }
.dd-grey { border-top-color: #999; margin-left: -1px; }
.more { font: 700 14px/14px "Liberation Sans", sans-serif; color: #222; }
.more-a { position: absolute; left: 138px; top: 1px; }
.more-b { position: absolute; right: 3px; top: 1px; }
.more-c { position: absolute; right: 4px; top: 1px; }
.grip { width: 2px; height: 14px; flex: none; margin: 0 3px 0 2px; background: repeating-linear-gradient(#aaa 0 2px, transparent 2px 4px); }
.sigma { width: 10px; font: 700 13px/16px "Liberation Sans", sans-serif; margin-right: 5px; }

.seg-a { width: 152px; padding-left: 6px; }
.ic-b { width: 18px; margin-left: 9px; }
.dd-a { margin: 0 8px 0 5px; }
.ic-c { margin-right: 5px; }
.sep-a { margin-right: 8px; }
.ic-d { width: 14px; }
.dd-b { margin-left: 7px; }
.seg-b { width: 547px; margin-left: 1px; padding-left: 4px; }
.seg-c { width: 662px; margin-left: 4px; }
.combo { display: flex; align-items: center; gap: 3px; height: 23px; background: #fff; padding-left: 2px; flex: none; }
.ddbox { width: 11px; height: 23px; background: #fbfbfb; display: flex; align-items: center; justify-content: center; flex: none; margin-right: 2px; }
.c-2d { width: 50px; padding-left: 4px; height: 27px; }
.c-2d + .ddbox { margin: 0 5px 0 1px; }

.main { display: flex; height: 624px; flex: none; }
.side { width: 165px; flex: none; display: flex; flex-direction: column; }
.side-head { height: 15px; border: 1px solid #8c8c8c; border-bottom: 0; display: flex; justify-content: space-between; align-items: center; background: #f0f0f0; line-height: 14px; font-size: 12px; padding-right: 4px; }
.pins { display: flex; gap: 8px; align-items: center; }
.pins svg { width: 9px; height: 10px; }
.sbtn { height: 22px; margin: 0 0 1px; padding: 0; border: 1px solid #a8a8a8; border-width: 1px 1px 1px 0; background: #f0f0f0; font: 12px/16px "Noto Sans CJK SC", sans-serif; color: #111; flex: none; }
.sbtn-a { margin-top: 1px; }
.sbtn-b { margin-top: 2px; margin-bottom: 0; }
.sbtn-c { margin-bottom: 0; }
.panel { height: 513px; border: 1px solid #9a9a9a; display: flex; flex-direction: column; background: #f0f0f0; flex: none; }
.panel-tools { height: 27px; background: #fff; display: flex; gap: 6px; margin-left: 2px; padding: 5px 0 0 5px; flex: none; }
.panel-tools svg { width: 16px; height: 15px; }
.tree-wrap { height: 468px; display: flex; position: relative; margin-left: 2px; }
.tree { width: 143px; height: 468px; overflow: hidden; background: #fff; flex: none; position: relative;
  background-image: repeating-linear-gradient(#8a8a8a 0 1px, transparent 1px 3px); background-size: 1px 100%; background-position: 12px 0; background-repeat: no-repeat; }
.tree li { height: 16px; position: relative; white-space: nowrap; display: flex; align-items: center; }
.tree .lat { margin-top: 2px; }
.n { padding-left: 43px; }
.n::before { content: ""; position: absolute; left: 32px; top: 0; height: 16px; width: 1px; background: repeating-linear-gradient(#8a8a8a 0 1px, transparent 1px 3px); }
.n::after { content: ""; position: absolute; left: 32px; top: 8px; height: 1px; width: 11px; background: repeating-linear-gradient(90deg, #8a8a8a 0 1px, transparent 1px 3px); }
.n.last::before { height: 8px; }
.ti { width: 15px; height: 16px; margin-right: 5px; flex: none; position: relative; z-index: 1; }
.g { padding-left: 7px; }
.g::after { content: ""; position: absolute; left: 18px; top: 8px; height: 1px; width: 5px; background: repeating-linear-gradient(90deg, #8a8a8a 0 1px, transparent 1px 3px); }
.chev { width: 7px; height: 7px; border: solid #444; border-width: 0 2px 2px 0; transform: rotate(45deg) translate(-2px, -2px); margin-right: 9px; flex: none; position: relative; background: #fff; }
.chev.shut { border-color: #aaa; transform: rotate(-45deg) translate(-2px, -1px); }
.fo { width: 16px; height: 14px; margin-right: 4px; flex: none; }
.tree .sel { background: linear-gradient(90deg, transparent 40px, #d6d6d6 40px, #d6d6d6 133px, transparent 133px); }
.float-ic { position: absolute; left: 130px; top: 416px; width: 14px; height: 16px; }
.float-b { position: absolute; left: 26px; top: 464px; width: 106px; height: 4px; }
.vscroll { width: 16px; height: 468px; background: #f0f0f0; position: relative; flex: none; }
.vthumb { position: absolute; left: 0; top: 234px; width: 16px; height: 209px; background: #cdcdcd; }
.up, .down, .left, .right { position: absolute; width: 7px; height: 7px; border: solid #555; }
.up { left: 5px; top: 7px; border-width: 2px 0 0 2px; transform: rotate(45deg); }
.down { left: 5px; bottom: 7px; border-width: 0 2px 2px 0; transform: rotate(45deg); }
.hscroll { height: 16px; position: relative; background: #f0f0f0; margin-left: 2px; }
.hthumb { position: absolute; left: 18px; top: 0; width: 102px; height: 16px; background: #cdcdcd; }
.left { left: 8px; top: 5px; border-width: 0 0 2px 2px; transform: rotate(45deg); }
.right { right: 22px; top: 5px; border-width: 2px 2px 0 0; transform: rotate(45deg); }

.work { width: 1196px; margin-left: 5px; flex: none; display: flex; flex-direction: column; position: relative; }
.row2 { height: 26px; margin: 0 0 1px 2px; }
.row3 { height: 27px; margin: 0 0 2px 2px; }
.row4 { height: 27px; margin: 0 0 1px 2px; }
.seg-d { width: 789px; }
.seg-e { width: 565px; }
.seg-f { width: 422px; margin-left: 74px; }
.seg-g { width: 1129px; }
.seg-h { width: 33px; margin-left: 32px; background: #f9f9f9; }
.c-44 { width: 45px; }
.c-60 { width: 60px; }
.c-58 { width: 58px; }
.c-46 { width: 46px; }
.c-50 { width: 50px; }
.sep-e { margin: 0 6px 0 5px; }
.active { background: #e2eefa; border: 1px solid #0078d7; height: 24px; }
.it-sel { width: 51px; padding-left: 6px; margin: 0 3px 0 -1px; gap: 0; }
.dd-sel { margin-right: 5px; }
.it-pt { gap: 6px; }
.it-rect { margin-left: 1px; }
.cad { width: 1196px; height: 507px; display: block; flex: none; }
.gl { stroke: #008000; fill: none; stroke-width: 1; }
.rd { stroke: #f00; fill: none; stroke-width: 1; }
.tick { stroke: #008000; fill: none; stroke-width: 1; }
.hexes polygon { fill: none; stroke: #008000; stroke-width: 1; }
.olive { fill: #737300; }
.violet { fill: #7800e6; }
.arrows path { fill: none; stroke: #555; stroke-width: 1.5; }
.arrows .thick { stroke-width: 2.5; }
.arrows .white { stroke: #fff; stroke-width: 1.5; }
.bluec { fill: #0073e6; stroke: #fff; stroke-width: 1.5; stroke-dasharray: 5 3; }
.dims text { font: 15px "Liberation Sans", sans-serif; text-anchor: middle; }
.lw { fill: #d8d8d8; }
.dk { fill: #6e6e6e; }

.rowb { height: 30px; padding: 2px 0; margin-left: 2px; }
.seg-i { width: 208px; height: 26px; }
.seg-j { width: 263px; height: 26px; margin-left: 2px; padding-left: 9px; }
.seg-k { width: 406px; height: 26px; margin-left: 6px; }
.it-b { margin-right: 4px; }
.it-snap { width: 75px; padding-left: 3px; gap: 1px; margin-right: 3px; }
.it-dyn { gap: 2px; margin-right: 0; }
.it-cross { margin-right: 5px; }
.it-pd, .it-md { width: 51px; padding-left: 3px; margin: 0; height: 23px; gap: 3px; }
.it-md { width: 50px; }
.it-vx { margin: 0 7px 0 4px; }
.it-last { margin: 0; }
.ddbox-k { margin: 0 4px 0 0; height: 26px; }
.seg-k .combo { height: 26px; }
.sep-k { margin: 0 3px 0 0; }
.sep-c { margin: 0 2px 0 5px; }
.lbl { color: #666; }
.lbl-y { margin-left: 5px; }
.spin { height: 22px; border: 1px solid #777; background: #f8f8f8; color: #666; display: flex; align-items: center; justify-content: flex-end; padding-right: 17px; margin: 0 2px 0 4px; position: relative; }
.s-57 { width: 57px; }
.s-67 { width: 67px; margin-right: 4px; }
.arr { position: absolute; right: 3px; top: 4px; width: 7px; height: 12px; }
.arr::before, .arr::after { content: ""; position: absolute; left: 0; width: 0; height: 0; border: 3.5px solid transparent; }
.arr::before { top: 0; border-top: 0; border-bottom: 4px solid #666; }
.arr::after { bottom: 0; border-bottom: 0; border-top: 4px solid #666; }
.chk { width: 11px; height: 11px; border: 1px solid #999; background: #f8f8f8; flex: none; }
.rot { margin: 0 0 0 9px; }

.status { height: 20px; display: flex; gap: 2px; flex: none; }
.cell { height: 19px; border: 1px solid #e2e2e2; border-bottom: 0; border-right-color: #d0d0d0; background: #f8f8f8; padding-left: 1px; line-height: 18px; display: block; flex: none; white-space: nowrap; }
.w1 { width: 148px; }
.w2 { width: 78px; }
.w3 { width: 98px; }
.w4 { width: 48px; padding-left: 2px; }
.w5 { width: 914px; }
.w6 { width: 70px; }

.taskbar { height: 40px; margin-top: 0; display: flex; background: #07161b; flex: none; position: relative; }
.start { width: 48px; background: #000; display: flex; align-items: center; justify-content: center; flex: none; }
.start svg { width: 16px; height: 16px; }
.search { width: 344px; background: #333; display: flex; align-items: center; padding-left: 9px; position: relative; flex: none; }
.cortana { width: 20px; height: 20px; border: 3px solid #e8e8e8; border-radius: 50%; flex: none; margin-right: 7px; }
.stext { color: #8f8f8f; font-size: 14px; }
.mic { position: absolute; left: 318px; top: 10px; width: 12px; height: 19px; }
.apps { display: flex; flex: none; }
.tile { width: 48px; height: 40px; display: flex; align-items: center; justify-content: center; flex: none; position: relative; }
.tile svg { width: 24px; height: 24px; }
.tile-v svg { width: 22px; height: 18px; }
.tile-l { width: 50px; }
.tile-fan { margin-left: 1px; }
.tile-edge { margin-left: 4px; }
.tile-ie { margin-left: 1px; }
.tile-folder { margin-left: -1px; }
.tile-1 { margin-left: 1px; }
.tile-u::after { content: ""; position: absolute; left: 4px; right: 4px; bottom: 0; height: 2px; background: #76b9ed; }
.tile-act { background: #2d3b40; }
.tile-act::after { content: ""; position: absolute; left: 0; right: 0; bottom: 0; height: 2px; background: #76b9ed; }
.tile-act svg { height: 26px; }
.tile-ext::before { content: ""; position: absolute; left: 44px; width: 6px; bottom: 0; height: 2px; background: #4f7e9f; }
.tray { position: relative; flex: 1; color: #e8e8e8; margin-left: 86px; }
.tray > * { position: absolute; }
.t-link { left: 0; top: 12px; color: #c8c8c8; }
.t-chev { left: 36px; top: 16px; width: 12px; height: 8px; }
.t-plug { left: 59px; top: 14px; width: 16px; height: 12px; }
.t-wifi { left: 85px; top: 14px; width: 13px; height: 13px; }
.t-spk { left: 106px; top: 13px; width: 16px; height: 14px; }
.t-kb { left: 130px; top: 14px; width: 23px; height: 13px; }
.t-zh { left: 164px; top: 12px; font-size: 13px; }
.t-sg { left: 190px; top: 13px; width: 16px; height: 15px; }
.clock { left: 222px; top: 2px; width: 60px; display: flex; flex-direction: column; align-items: center; gap: 4px; font: 13px/16px "Noto Sans CJK SC", sans-serif; }
.notif { left: 301px; top: 11px; width: 26px; height: 24px; }
.notif svg { width: 16px; height: 16px; display: block; }
.badge { position: absolute; left: 7px; top: 6px; width: 17px; height: 17px; border-radius: 50%; background: #444; border: 1px solid #888; color: #fff; font: 700 11px/15px "Liberation Sans", sans-serif; text-align: center; }
.t-edge { left: 337px; top: 0; width: 1px; height: 40px; background: #555; }
```
